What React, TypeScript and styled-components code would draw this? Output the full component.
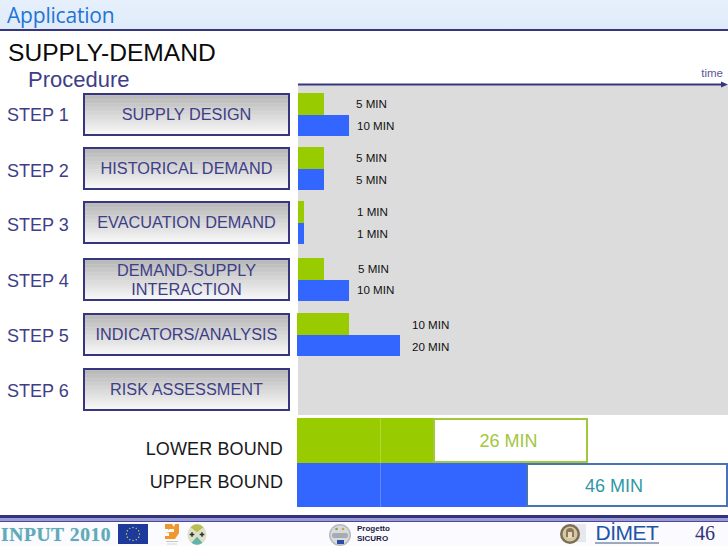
import React from "react";
import styled, { createGlobalStyle } from "styled-components";

const Global = createGlobalStyle`
  html, body { margin: 0; padding: 0; background: #fff; }
  body { font-family: "Liberation Sans", Arial, sans-serif; }
`;

const NAVY = "#36367f";
const INK = "#3e3e88";

const Page = styled.div`
  width: 728px;
  height: 546px;
  overflow: hidden;
  display: flex;
  flex-direction: column;
  background: #fff;
`;

const Header = styled.header`
  height: 28px;
  flex: none;
  box-sizing: content-box;
  background: linear-gradient(#e6f0fc, #e0ebfa);
  border-bottom: 2px solid ${NAVY};
  padding: 1px 0 0 7px;
  font: 21px/28px "Open Sans", "Noto Sans", sans-serif;
  color: #1f74d4;
  letter-spacing: -0.2px;
`;

const Upper = styled.div`
  display: grid;
  grid-template-columns: 298px 430px;
  flex: none;
  height: 384px;
`;

const LeftColumn = styled.div`
  display: flex;
  flex-direction: column;
`;

const Title = styled.h1`
  margin: 8px 0 0 8px;
  font: 400 24.6px/28px "Liberation Sans", sans-serif;
  color: #0a0a0a;
`;

const Subtitle = styled.h2`
  margin: 0 0 1px 28px;
  font: 400 22px/25px "Liberation Sans", sans-serif;
  color: ${INK};
`;

const StepRow = styled.div<{ $top: number }>`
  display: grid;
  grid-template-columns: 83px 207px;
  align-items: center;
  height: 43px;
  margin-top: ${(p) => p.$top}px;
`;

const StepLabel = styled.span<{ $drop: number }>`
  padding-left: 7px;
  padding-top: ${(p) => p.$drop * 2}px;
  font-size: 18px;
  color: ${INK};
`;

const StepBox = styled.div`
  box-sizing: border-box;
  height: 43px;
  border: 2px solid ${NAVY};
  background:
    repeating-linear-gradient(rgba(255, 255, 255, 0.09) 0 1px, transparent 1px 4px) top / 100% 60% no-repeat,
    linear-gradient(#b6b6b6, #f8f8f8);
  display: flex;
  align-items: center;
  justify-content: center;
  text-align: center;
  font-size: 16.3px;
  line-height: 19px;
  color: ${INK};
`;

const RightColumn = styled.div`
  display: flex;
  flex-direction: column;
`;

const TimeLabel = styled.div`
  height: 54px;
  flex: none;
  box-sizing: border-box;
  padding: 35px 5px 0 0;
  text-align: right;
  font-size: 11.5px;
  line-height: 14px;
  color: #5a5a96;
`;

const Panel = styled.div`
  position: relative;
  height: 330px;
  background: #dcdcdc;
  padding-top: 8px;
  box-sizing: border-box;
`;

const Arrow = styled.svg`
  position: absolute;
  top: -4px;
  left: 0;
`;

const BarGroup = styled.div<{ $top: number; $nudge?: number }>`
  height: 43px;
  margin-top: ${(p) => p.$top}px;
  margin-left: ${(p) => p.$nudge ?? 0}px;
  display: flex;
  flex-direction: column;
`;

const BarLine = styled.div<{ $labelAt: number }>`
  flex: 1;
  display: grid;
  grid-template-columns: ${(p) => p.$labelAt}px 1fr;
  align-items: center;
`;

const Bar = styled.div<{ $w: number; $color: string }>`
  width: ${(p) => p.$w}px;
  height: 100%;
  background: ${(p) => p.$color};
`;

const BarText = styled.span<{ $drop?: number }>`
  padding-top: ${(p) => (p.$drop ?? 0) * 2}px;
  font-size: 11.6px;
  line-height: 14px;
  color: #111;
`;

const BoundRow = styled.div<{ $h: number }>`
  display: grid;
  grid-template-columns: 297px 1fr;
  height: ${(p) => p.$h}px;
  flex: none;
`;

const BoundName = styled.div<{ $pt: number }>`
  text-align: right;
  padding: ${(p) => p.$pt}px 14px 0 0;
  font-size: 18px;
  line-height: 20px;
  letter-spacing: 0.12px;
  color: #1a1a1a;
`;

const BoundTrack = styled.div`
  display: flex;
  height: 100%;
`;

const Fill = styled.div<{ $w: number; $color: string }>`
  width: ${(p) => p.$w}px;
  background: ${(p) => p.$color};
  flex: none;
  display: flex;
`;

const FillSeam = styled.div`
  width: 84px;
  flex: none;
  border-right: 1px solid rgba(255, 255, 255, 0.22);
  box-sizing: border-box;
`;

const Total = styled.div<{ $w: number; $border: string; $color: string; $shift: number }>`
  width: ${(p) => p.$w}px;
  flex: none;
  box-sizing: border-box;
  border: 2px solid ${(p) => p.$border};
  background: #fff;
  color: ${(p) => p.$color};
  font-size: 18px;
  display: flex;
  align-items: center;
  justify-content: center;
  padding: 2px ${(p) => p.$shift}px 0 0;
`;

const Bottom = styled.div`
  display: flex;
  flex-direction: column;
  margin-top: 3px;
`;

const Footer = styled.footer`
  margin-top: 8px;
  flex: 1;
  display: flex;
  flex-direction: column;
  background: #fbfbff;
`;

const Band = styled.div`
  height: 3px;
  flex: none;
  background: #9a9ad6;
  border-top: 3px solid #33337c;
  border-bottom: 1px solid #4a4a92;
`;

const LogoRow = styled.div`
  flex: 1;
  display: flex;
  align-items: flex-start;
  padding-top: 1px;
`;

const InputLogo = styled.div`
  margin: 0 0 0 1px;
  width: 111px;
  flex: none;
  font: 700 19.6px/23px "Liberation Serif", serif;
  letter-spacing: 0.55px;
  white-space: nowrap;
  color: #62a9b8;
  text-shadow: 0 0 1px #a9d4dc;
`;

const Logo = styled.svg<{ $ml: number; $mt?: number }>`
  flex: none;
  margin-left: ${(p) => p.$ml}px;
  margin-top: ${(p) => p.$mt ?? 0}px;
`;

const ProjectName = styled.div`
  margin: 1px 0 0 6px;
  width: 34px;
  flex: none;
  font: 700 8px/10px "Liberation Sans", sans-serif;
  color: #1b1b3f;
`;

const DimetBlock = styled.div`
  margin: 1px 0 0 9px;
  width: 64px;
  flex: none;
  display: flex;
  flex-direction: column;
  align-items: center;
`;

const DimetWord = styled.div`
  font: 400 21px/18px "Liberation Sans", sans-serif;
  color: #1c55a8;
  letter-spacing: -0.5px;
`;

const DimetRule = styled.div`
  width: 64px;
  height: 2px;
  background: #9aa8c0;
`;

const PageNumber = styled.div`
  margin: -1px 0 0 36px;
  font: 400 20px/22px "Liberation Serif", serif;
  color: #33337c;
`;

type Step = { n: number; text: React.ReactNode; top: number; drop: number };
const steps: Step[] = [
  { n: 1, text: "SUPPLY DESIGN", top: 0, drop: 1 },
  { n: 2, text: "HISTORICAL DEMAND", top: 11, drop: 3 },
  { n: 3, text: "EVACUATION DEMAND", top: 11, drop: 3 },
  { n: 4, text: <>DEMAND-SUPPLY<br />INTERACTION</>, top: 14, drop: 2 },
  { n: 5, text: "INDICATORS/ANALYSIS", top: 12, drop: 2 },
  { n: 6, text: "RISK ASSESSMENT", top: 12, drop: 2 },
];

type BarRow = { top: number; nudge?: number; g: number; b: number; gt: string; bt: string; gx: number; bx: number; gd?: number; bd: number };
const bars: BarRow[] = [
  { top: 0, g: 26, b: 51, gt: "5 MIN", bt: "10 MIN", gx: 58, bx: 59, bd: 1 },
  { top: 11, g: 26, b: 26, gt: "5 MIN", bt: "5 MIN", gx: 58, bx: 58, bd: 1 },
  { top: 11, g: 6, b: 6, gt: "1 MIN", bt: "1 MIN", gx: 59, bx: 59, bd: 1 },
  { top: 14, g: 26, b: 51, gt: "5 MIN", bt: "10 MIN", gx: 60, bx: 59, bd: 0 },
  { top: 12, nudge: -1, g: 52, b: 103, gt: "10 MIN", bt: "20 MIN", gx: 115, bx: 115, gd: 1, bd: 2 },
];

const GREEN = "#99cc00";
const BLUE = "#3366ff";

const App: React.FC = () => (
  <Page>
    <Global />
    <Header>Application</Header>
    <Upper>
      <LeftColumn>
        <Title>SUPPLY-DEMAND</Title>
        <Subtitle>Procedure</Subtitle>
        {steps.map((s) => (
          <StepRow key={s.n} $top={s.top}>
            <StepLabel $drop={s.drop}>STEP {s.n}</StepLabel>
            <StepBox>
              <span>{s.text}</span>
            </StepBox>
          </StepRow>
        ))}
      </LeftColumn>
      <RightColumn>
        <TimeLabel>time</TimeLabel>
        <Panel>
          <Arrow width="430" height="8" viewBox="0 0 430 8">
            <line x1="0" y1="3.5" x2="424" y2="3.5" stroke={NAVY} strokeWidth="2" />
            <polygon points="423,0.5 430,3.5 423,6.5" fill={NAVY} />
          </Arrow>
          {bars.map((r, i) => (
            <BarGroup key={i} $top={r.top} $nudge={r.nudge}>
              <BarLine $labelAt={r.gx}>
                <Bar $w={r.g} $color={GREEN} />
                <BarText $drop={r.gd}>{r.gt}</BarText>
              </BarLine>
              <BarLine $labelAt={r.bx}>
                <Bar $w={r.b} $color={BLUE} />
                <BarText $drop={r.bd}>{r.bt}</BarText>
              </BarLine>
            </BarGroup>
          ))}
        </Panel>
      </RightColumn>
    </Upper>
    <Bottom>
      <BoundRow $h={45}>
        <BoundName $pt={21}>LOWER BOUND</BoundName>
        <BoundTrack>
          <Fill $w={136} $color={GREEN}>
            <FillSeam />
          </Fill>
          <Total $w={155} $border="#a0c83a" $color="#a4c640" $shift={4}>
            26 MIN
          </Total>
        </BoundTrack>
      </BoundRow>
      <BoundRow $h={44}>
        <BoundName $pt={9}>UPPER BOUND</BoundName>
        <BoundTrack>
          <Fill $w={229} $color={BLUE}>
            <FillSeam />
          </Fill>
          <Total $w={202} $border="#4674b6" $color="#2f98a6" $shift={26}>
            46 MIN
          </Total>
        </BoundTrack>
      </BoundRow>
    </Bottom>
    <Footer>
      <Band />
      <LogoRow>
        <InputLogo>INPUT 2010</InputLogo>
        <Logo $ml={6} $mt={1} width="30" height="20" viewBox="0 0 30 20">
          <rect width="30" height="20" fill="#1c3a9c" />
          {Array.from({ length: 12 }).map((_, i) => {
            const a = (i * Math.PI) / 6;
            return <circle key={i} cx={15 + 6.5 * Math.cos(a)} cy={10 + 6.5 * Math.sin(a)} r="0.7" fill="#e8d850" />;
          })}
        </Logo>
        <Logo $ml={16} width="16" height="23" viewBox="0 0 16 23">
          <path d="M1 1h7l2 3 1-3h4v9l-4 6H1V10l5-1-2-3H1z" fill="#f0962c" />
          <path d="M5 6h5v3H5zM1 10h4v3H1z" fill="#fff" />
          <rect x="2" y="18" width="12" height="1" fill="#c8c8c8" />
          <rect x="3" y="20.5" width="10" height="1" fill="#d8d8d8" />
        </Logo>
        <Logo $ml={7} width="20" height="23" viewBox="0 0 22 23">
          <ellipse cx="11" cy="11.5" rx="10.5" ry="11.5" fill="#dfe0c8" />
          <path d="M4 3.5A10 11.5 0 0 1 18 3.5L11 9z" fill="#b8bf50" />
          <path d="M5 20.5A10 11.5 0 0 0 17 20.5L11 14z" fill="#62b3a8" />
          <path d="M3 11.5h5M5.5 9v5M14 11.5h5M16.5 9v5" stroke="#25302c" strokeWidth="1.6" />
        </Logo>
        <Logo $ml={122} $mt={1} width="22" height="22" viewBox="0 0 22 22">
          <circle cx="11" cy="11" r="11" fill="#b8bcc0" />
          <circle cx="11" cy="11" r="9.5" fill="#d8dadc" />
          <circle cx="7.5" cy="5" r="1.3" fill="#8ea04c" />
          <circle cx="14" cy="5" r="1.3" fill="#c2a94c" />
          <rect x="3" y="9" width="16" height="5" rx="2" fill="#a6acb4" />
          <rect x="8" y="16" width="7" height="4" fill="#2a4ea0" />
        </Logo>
        <ProjectName>
          Progetto
          <br />
          SICURO
        </ProjectName>
        <Logo $ml={169} $mt={1} width="26" height="20" viewBox="0 0 26 20">
          <rect x="13" y="0" width="13" height="18" fill="#e6e8ee" />
          <circle cx="10" cy="10" r="10" fill="#7a6e55" />
          <circle cx="10" cy="10" r="7.5" fill="#d8c8a0" />
          <path d="M6 8a4 4 0 0 1 8 0v5H6z" fill="#8a7a5c" />
          <rect x="8" y="8" width="4" height="6" fill="#e8dcc0" />
        </Logo>
        <DimetBlock>
          <DimetWord>DİMET</DimetWord>
          <DimetRule />
        </DimetBlock>
        <PageNumber>46</PageNumber>
      </LogoRow>
    </Footer>
  </Page>
);

export default App;
